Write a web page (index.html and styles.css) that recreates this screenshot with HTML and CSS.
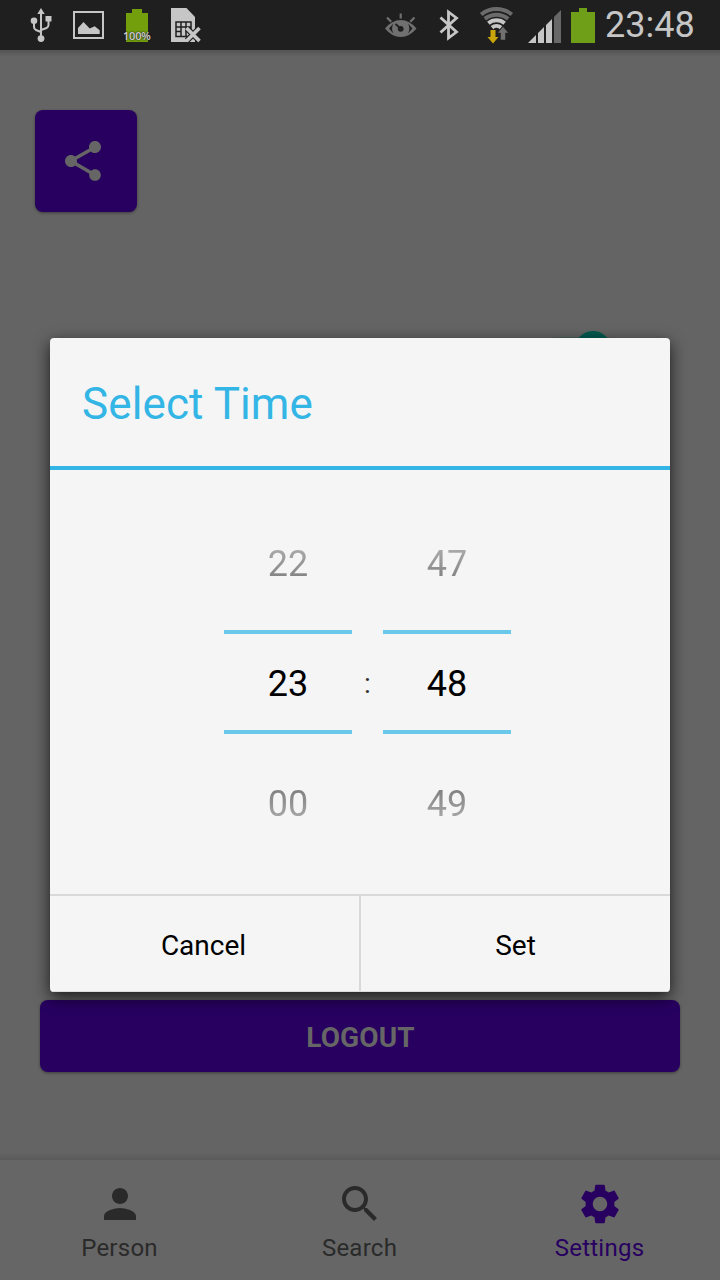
FILE: index.html
```html
<!DOCTYPE html>
<html lang="en">
<head>
<meta charset="utf-8">
<title>Settings</title>
<link rel="stylesheet" href="styles.css">
</head>
<body>
<div class="screen">
  <header class="status">
    <div class="status-left">
      <svg class="ic" width="24" height="50" viewBox="29 0 24 50"><g fill="none" stroke="#c6c6c6" stroke-width="2"><path d="M41 12v26M34 21v6q0 2 2 3l5 2M48.500 19v6q0 2-2 3l-5.500 2"/></g><g fill="#c6c6c6"><path d="M41 8l3.700 6h-7.400z"/><circle cx="34" cy="20.700" r="3.300"/><path d="M45.500 16h6v5.500h-6z"/><circle cx="41" cy="38.600" r="3.400"/></g></svg>
      <svg class="ic gallery" width="32" height="50" viewBox="73 0 32 50"><path d="M74 12h29v26H74z" fill="none" stroke="#c6c6c6" stroke-width="2"/><path d="M78 34v-6l5.500-6 6.200 6.500 5-2.300 5 4v3.800z" fill="#c6c6c6"/></svg>
      <div class="charge">
        <svg width="22" height="33" viewBox="0 0 22 33"><path d="M6 0h10v4h6v29H0V4h6z" fill="#729f0b"/></svg>
        <span class="charge-label">100%</span>
      </div>
      <svg class="ic" width="30" height="50" viewBox="171 0 30 50"><path d="M171 8h15.500l8.500 9v25h-24z" fill="#c6c6c6"/><g fill="none" stroke="#1f1f1f" stroke-width="1.500"><path d="M176 22h15v14.500h-15zM181 22v14.500M186 22v14.500M176 27h15M176 31.500h5"/></g><path d="M187 28.500l12 12M199 28.500l-12 12" stroke="#1f1f1f" stroke-width="6"/><path d="M186.500 28l13 13M199.500 28l-13 13" stroke="#c6c6c6" stroke-width="3.600"/></svg>
    </div>
    <div class="status-right">
      <svg class="ic" width="32" height="50" viewBox="385 0 32 50"><path d="M385 28.500q7-8.500 15.700-8.500t15.800 8.500q-7 8.500-15.800 8.500T385 28.500z" fill="#707070"/><path d="M408 23.500q2.600 5 0 10l4.500-5zM393.400 23.500q-2.600 5 0 10l-4.500-5z" fill="#1f1f1f"/><circle cx="400.700" cy="28.800" r="2.900" fill="#1f1f1f"/><path d="M395.500 24l5 4.500" stroke="#1f1f1f" stroke-width="1.800"/><path d="M400.700 13.500v5M387 17.500l4.200 4.200M414.500 17.500l-4.200 4.200" stroke="#707070" stroke-width="2.200"/></svg>
      <svg class="ic bt" width="20" height="50" viewBox="439 0 20 50"><path d="M440.500 17.500l16 14.500-8 6V12l8 6-16 14.500" fill="none" stroke="#c6c6c6" stroke-width="2.800"/></svg>
      <svg class="ic wifi" width="36" height="50" viewBox="479 0 36 50"><g fill="none" stroke-width="4"><path d="M481.200 14.500a24 24 0 0 1 30.600 0M484.900 18.900a18.300 18.300 0 0 1 23.200 0" stroke="#6b6b6b"/><path d="M488.400 23.200a12.700 12.700 0 0 1 16.200 0M492 27.600a7 7 0 0 1 9 0" stroke="#c6c6c6"/></g><path d="M490.500 30h5v7h3l-5.500 6.500-5.500-6.500h3z" fill="#c9a50c"/><path d="M500.500 40h5v-7h3l-5.500-6.500-5.500 6.500h3z" fill="#707070" stroke="#1f1f1f" stroke-width=".5"/></svg>
      <svg class="ic signal" width="34" height="50" viewBox="528 0 34 50"><path d="M528 43l8-8v8zM538 43V33l6-6v16zM546 43V25l6-6v24z" fill="#c6c6c6"/><path d="M554 43V17l7-7v33z" fill="#686868"/></svg>
      <svg class="ic battery" width="24" height="50" viewBox="571 0 24 50"><path d="M571 12h8V8h8v4h8v31h-24z" fill="#6f9e19"/></svg>
      <span class="clock">23:48</span>
    </div>
  </header>

  <main class="page">
    <button class="share" aria-label="Share"><svg width="48" height="48" viewBox="0 0 24 24" fill="#666"><path d="M18 16.080c-.76 0-1.440.3-1.960.77L8.910 12.700c.05-.23.09-.46.09-.7s-.04-.47-.09-.7l7.050-4.110c.54.5 1.250.81 2.040.81 1.660 0 3-1.340 3-3s-1.340-3-3-3-3 1.340-3 3c0 .24.04.47.09.7L8.040 9.810C7.500 9.310 6.790 9 6 9c-1.660 0-3 1.340-3 3s1.340 3 3 3c.79 0 1.500-.31 2.040-.81l7.120 4.160c-.05.21-.08.43-.08.65 0 1.610 1.310 2.920 2.920 2.920s2.920-1.310 2.920-2.920-1.310-2.920-2.920-2.920z"/></svg></button>
    <div class="switch"><div class="thumb"></div></div>
    <button class="logout">LOGOUT</button>
  </main>

  <nav class="tabs">
    <div class="tab"><svg width="48" height="48" viewBox="0 0 24 24"><path fill="currentColor" d="M12 12c2.210 0 4-1.790 4-4s-1.790-4-4-4-4 1.790-4 4 1.790 4 4 4zm0 2c-2.670 0-8 1.340-8 4v2h16v-2c0-2.660-5.330-4-8-4z"/></svg><span>Person</span></div>
    <div class="tab"><svg width="48" height="48" viewBox="0 0 24 24"><path fill="currentColor" d="M15.500 14h-.79l-.28-.27C15.410 12.590 16 11.110 16 9.500 16 5.910 13.090 3 9.500 3S3 5.910 3 9.500 5.910 16 9.500 16c1.610 0 3.090-.59 4.230-1.570l.27.28v.79l5 4.990L20.490 19l-4.990-5zm-6 0C7.010 14 5 11.990 5 9.500S7.010 5 9.500 5 14 7.010 14 9.500 11.990 14 9.500 14z"/></svg><span>Search</span></div>
    <div class="tab active"><svg width="48" height="48" viewBox="0 0 24 24"><path fill="currentColor" d="M19.140 12.940c.04-.3.060-.61.060-.94 0-.32-.02-.64-.07-.94l2.030-1.580c.18-.14.23-.41.12-.61l-1.920-3.320c-.12-.22-.37-.29-.59-.22l-2.390.96c-.5-.38-1.030-.7-1.620-.94l-.36-2.540c-.04-.24-.24-.41-.48-.41h-3.840c-.24 0-.43.17-.47.41l-.36 2.540c-.59.24-1.130.57-1.620.94l-2.390-.96c-.22-.08-.47 0-.59.22L2.740 8.870c-.12.21-.08.47.12.61l2.030 1.580c-.05.3-.09.63-.09.94s.02.64.07.94l-2.030 1.580c-.18.14-.23.41-.12.61l1.920 3.320c.12.22.37.29.59.22l2.390-.96c.5.38 1.030.7 1.620.94l.36 2.540c.05.24.24.41.48.41h3.840c.24 0 .44-.17.47-.41l.36-2.540c.59-.24 1.130-.56 1.620-.94l2.390.96c.22.08.47 0 .59-.22l1.920-3.320c.12-.22.07-.47-.12-.61l-2.010-1.580zM12 15.600c-1.980 0-3.600-1.620-3.600-3.600s1.620-3.600 3.600-3.600 3.600 1.620 3.600 3.600-1.620 3.600-3.600 3.600z"/></svg><span>Settings</span></div>
  </nav>

  <section class="dialog" role="dialog">
    <h1 class="title">Select Time</h1>
    <div class="pickers">
      <div class="picker">
        <div class="num prev">22</div>
        <div class="num current">23</div>
        <div class="num next">00</div>
      </div>
      <div class="colon">:</div>
      <div class="picker">
        <div class="num prev">47</div>
        <div class="num current">48</div>
        <div class="num next">49</div>
      </div>
    </div>
    <div class="actions">
      <button class="action cancel">Cancel</button>
      <button class="action set">Set</button>
    </div>
  </section>
</div>
</body>
</html>
```
FILE: styles.css
```css
* { box-sizing: border-box; }
body { margin: 0; font-family: Roboto, sans-serif; }
button { border: 0; padding: 0; font: inherit; }
svg { display: block; flex: none; }
.screen { position: relative; width: 720px; height: 1280px; display: flex; flex-direction: column; background: #646464; overflow: hidden; }

.status { height: 50px; flex: none; display: flex; justify-content: space-between; background: #1f1f1f; padding: 0 26px 0 29px; }
.status-left, .status-right { display: flex; }
.gallery { margin-left: 20px; }
.charge { position: relative; width: 22px; margin: 9px 23px 0 21px; }
.charge-label { position: absolute; left: -3px; top: 20px; font: 600 11px/14px "Open Sans", sans-serif; color: #d0d0d0; text-shadow: 0 0 2px #222, 0 0 1px #222; letter-spacing: -.2px; }
.bt { margin-left: 22px; }
.wifi { margin-left: 20px; }
.signal { margin-left: 13px; }
.battery { margin-left: 9px; }
.clock { width: 99px; padding-left: 10px; font-size: 36px; line-height: 50px; color: #c6c6c6; white-space: nowrap; }

.page { flex: 1; display: flex; flex-direction: column; padding: 60px 40px 88px 35px; background: linear-gradient(#545454, #646464 7px, #646464 1103px, #5a5a5a); }
.share { width: 102px; height: 102px; border-radius: 8px; background: #270060; display: grid; place-items: center; box-shadow: 0 1px 3px rgba(0,0,0,.4); }
.share svg { margin-left: -6px; }
.switch { margin: 119px 69px 0 auto; width: 60px; height: 36px; display: flex; justify-content: flex-end; background: linear-gradient(transparent 6px, #4d615e 6px, #4d615e 30px, transparent 30px); border-radius: 14px; }
.thumb { width: 36px; height: 36px; border-radius: 50%; background: #015a50; }
.logout { margin: auto 0 0 5px; height: 72px; border-radius: 8px; padding: 2px 0 0 1px; background: #270060; color: #666; font-size: 28px; font-weight: 700; letter-spacing: .1px; box-shadow: 0 1px 3px rgba(0,0,0,.4); }

.tabs { height: 120px; flex: none; display: flex; background: #666; color: #2a2a2a; }
.tab { flex: 1; padding-top: 20px; display: flex; flex-direction: column; align-items: center; font-size: 24px; line-height: 28px; letter-spacing: .25px; }
.tab span { margin: 6px 1px 0 0; }
.active { color: #270060; }

.dialog { position: absolute; left: 50px; top: 338px; width: 620px; height: 654px; display: flex; flex-direction: column; background: #f5f5f5; border-radius: 4px; box-shadow: 0 5px 16px rgba(0,0,0,.75); overflow: hidden; }
.title { margin: 0; height: 132px; border-bottom: 4px solid #33b5e5; padding-left: 32px; font-size: 44px; font-weight: 400; line-height: 132px; letter-spacing: .1px; color: #33b5e5; }
.pickers { flex: 1; display: flex; padding: 34px 159px 0 174px; }
.picker { width: 128px; }
.num { height: 120px; font-size: 36px; line-height: 120px; text-align: center; color: transparent; background-clip: text; -webkit-background-clip: text; }
.prev { background-image: linear-gradient(#aaa 45px, #808080 76px); }
.current { height: 104px; margin: 6px 0 10px; line-height: 100px; color: #000; border: solid #6ac8eb; border-width: 4px 0; }
.next { background-image: linear-gradient(#808080 45px, #aaa 76px); }
.colon { flex: 1; padding-top: 120px; text-align: center; font-size: 28px; line-height: 120px; color: #333; }
.actions { height: 98px; display: grid; grid-template-columns: 311px 309px; border-top: 2px solid #d9d9d9; border-bottom: 1px solid #dcdcdc; }
.action { padding-top: 4px; background: transparent; color: #000; font-size: 28px; }
.cancel { padding-right: 2px; border-right: 2px solid #d9d9d9; }
```
